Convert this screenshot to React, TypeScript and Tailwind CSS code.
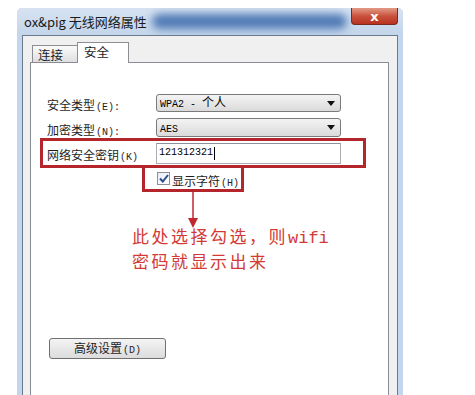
import React from "react";

const MONO = "font-['Liberation_Mono','Noto_Sans_CJK_SC',monospace]";

function Lbl({ cn, en }: { cn: string; en: string }) {
  return (
    <span className="text-[12px] leading-none text-[#1e1e1e] whitespace-nowrap">
      {cn}
      <span className={`${MONO} text-[10px] ml-[1px]`}>{en}</span>
    </span>
  );
}

function Select({ value, h }: { value: React.ReactNode; h: string }) {
  return (
    <div
      className={`w-[185px] ${h} flex items-center justify-between rounded-[3px] border border-[#7a7a7a] bg-gradient-to-b from-[#f4f4f4] to-[#dadada] pl-[3px] pr-[5px]`}
    >
      <span className="text-[12px] leading-none text-black">{value}</span>
      <svg width="8" height="5" viewBox="0 0 8 5">
        <path d="M0 0h8L4 5z" fill="#111" />
      </svg>
    </div>
  );
}

export default function App() {
  return (
    <div className="w-[475px] h-[395px] overflow-hidden bg-white pt-[8px] pl-[17px] font-['Noto_Sans_CJK_SC',sans-serif]">
      <div className="w-[386px] h-[387px] flex flex-col rounded-t-[5px] bg-[#c2d7ef]">
        {/* title bar */}
        <div className="relative h-[27px] flex items-center pl-[7px] rounded-t-[5px] overflow-hidden bg-gradient-to-b from-[#d7e3f2] to-[#c3d5ea]">
          <div className="absolute left-[135px] top-[6px] w-[195px] h-[15px] rounded-full bg-[#4f79b4] blur-[4px]" />
          <span className="relative text-[13px] leading-none text-[#1a1a1a] whitespace-nowrap">
            ox&amp;pig 无线网络属性
          </span>
          <div className="absolute right-[5px] top-0 w-[47px] h-[17px] flex items-center justify-center rounded-b-[4px] border border-t-0 border-[#7a2a20] bg-gradient-to-b from-[#e29a87] via-[#c9523d] to-[#b8321f]">
            <span className="text-[13px] leading-none font-bold text-white font-['DejaVu_Sans',sans-serif]">
              x
            </span>
          </div>
        </div>

        {/* body */}
        <div className="flex-1 mx-[5px] flex flex-col border border-b-0 border-[#6c7989] bg-[#f0f0f0] pl-[7px] pr-[8px] pt-[6px]">
          <div className="h-[20px] flex items-end pl-[2px]">
            <div className="w-[46px] h-[17px] border border-b-0 border-[#8c8e94] bg-gradient-to-b from-[#fbfbfb] to-[#dedede] pl-[5px] pt-[1px] text-[12.5px] leading-[15px] text-[#1e1e1e]">
              连接
            </div>
            <div className="relative z-10 -ml-px -mb-px w-[52px] h-[21px] border border-b-0 border-[#8c8e94] bg-white pl-[6px] pt-[1px] text-[12.5px] leading-[15px] text-[#1e1e1e]">
              安全
            </div>
          </div>

          <div className="flex-1 border border-b-0 border-[#898c95] bg-white pt-[31px]">
            <div className="flex items-center h-[18px] pl-[16px]">
              <div className="w-[109px]">
                <Lbl cn="安全类型" en="(E):" />
              </div>
              <Select
                h="h-[18px]"
                value={
                  <>
                    <span className={`${MONO} text-[10px]`}>WPA2 - </span>个人
                  </>
                }
              />
            </div>
            <div className="flex items-center h-[19px] pl-[16px] mt-[6px]">
              <div className="w-[109px]">
                <Lbl cn="加密类型" en="(N):" />
              </div>
              <Select h="h-[19px]" value={<span className={`${MONO} text-[10px]`}>AES</span>} />
            </div>

            {/* annotated key row */}
            <div className="ml-[9px] mt-[1px] w-[326px] h-[30px] border-[3px] border-[#b5262c] flex items-center pl-[4px]">
              <div className="w-[109px]">
                <Lbl cn="网络安全密钥" en="(K)" />
              </div>
              <div className="w-[185px] h-[21px] flex items-center border border-[#abadb3] border-t-[#8e9199] bg-white pl-[2px]">
                <span className={`${MONO} text-[10px] leading-none text-black`}>121312321</span>
                <span className="w-px h-[13px] bg-black ml-[1px]" />
              </div>
            </div>
            <div className="ml-[111px] w-[102px] h-[24px] border-[3px] border-t-0 border-[#b5262c] flex items-center pl-[12px]">
              <div className="w-[13px] h-[13px] border border-[#8f8f8f] bg-gradient-to-br from-[#e8eef7] to-[#ffffff] flex items-center justify-center">
                <svg width="10" height="9" viewBox="0 0 10 9">
                  <path d="M1 4.5l2.8 3L9 1" fill="none" stroke="#2a4c8a" strokeWidth="2" />
                </svg>
              </div>
              <span className="ml-[2px]">
                <Lbl cn="显示字符" en="(H)" />
              </span>
            </div>

            {/* arrow */}
            <svg className="ml-[156px]" width="12" height="36" viewBox="0 0 12 36">
              <path d="M6 0v28" stroke="#c0282e" strokeWidth="1.5" />
              <path d="M1 26h10l-5 10z" fill="#c0282e" />
            </svg>

            <div className="ml-[101px] -mt-[3px] text-[17px] leading-[22px] tracking-[2.5px] text-[#d33a36] whitespace-nowrap">
              <div>
                此处选择勾选，则<span className={`${MONO} text-[17px] tracking-[0px]`}>wifi</span>
              </div>
              <div>密码就显示出来</div>
            </div>

            <div className="ml-[18px] mt-[66px] w-[117px] h-[21px] rounded-[3px] border border-[#707070] bg-gradient-to-b from-[#f4f4f4] to-[#dcdcdc] flex items-center justify-center">
              <Lbl cn="高级设置" en="(D)" />
            </div>
          </div>
        </div>
      </div>
    </div>
  );
}
